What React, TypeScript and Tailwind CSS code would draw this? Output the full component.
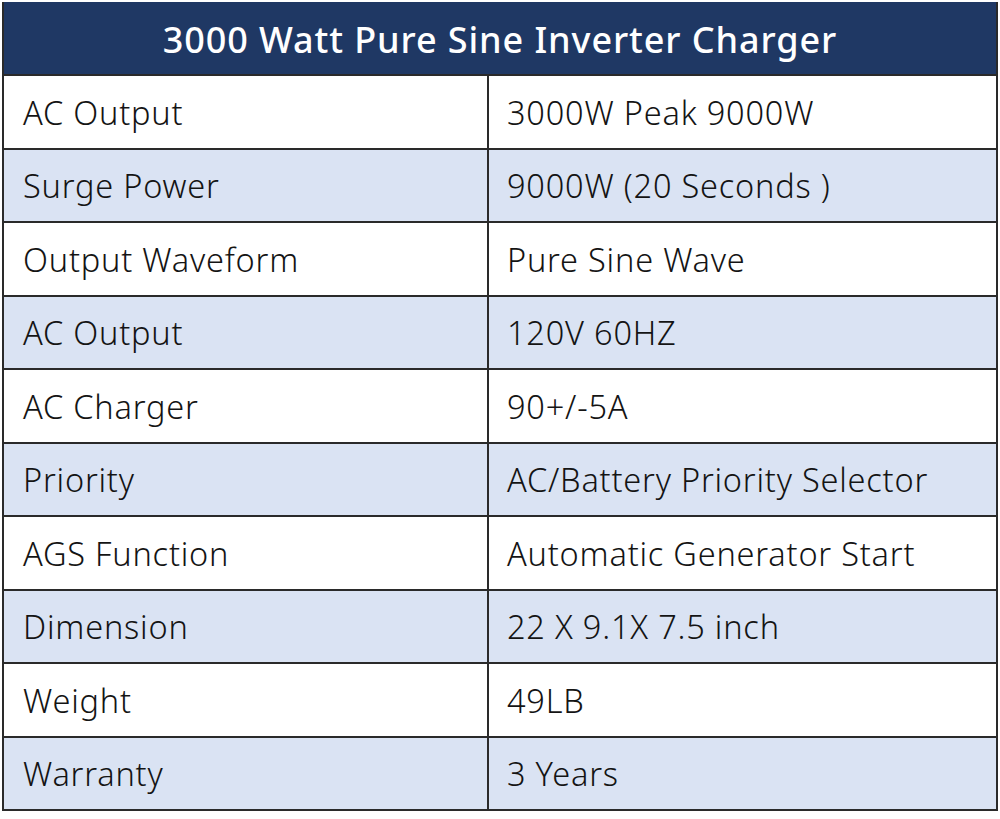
import React from "react";

const rows: [string, string][] = [
  ["AC Output", "3000W Peak 9000W"],
  ["Surge Power", "9000W (20 Seconds )"],
  ["Output Waveform", "Pure Sine Wave"],
  ["AC Output", "120V 60HZ"],
  ["AC Charger", "90+/-5A"],
  ["Priority", "AC/Battery Priority Selector"],
  ["AGS Function", "Automatic Generator Start"],
  ["Dimension", "22 X 9.1X 7.5 inch"],
  ["Weight", "49LB"],
  ["Warranty", "3 Years"],
];

export default function App() {
  return (
    <div className="w-[1000px] h-[819px] bg-white pt-[2px] pl-[2px]" style={{ fontFamily: '"Noto Sans", "Open Sans", sans-serif' }}>
      <div className="w-[996px] border-2 border-[#2a2a2a] border-b-0">
        <div className="h-[74px] -mt-[2px] pt-[3px] bg-[#1f3864] border-b-2 border-[#2a2a2a] flex items-center justify-center text-white text-[36px] font-medium tracking-[0.9px]">
          3000 Watt Pure Sine Inverter Charger
        </div>
        {rows.map(([a, b], i) => (
          <div
            key={i}
            className={`grid grid-cols-[485px_1fr] h-[73.5px] border-b-2 border-[#2a2a2a] text-[32.5px] font-light tracking-[0.8px] text-[#141414] ${i % 2 === 1 ? "bg-[#dae3f3]" : "bg-white"}`}
          >
            <div className="flex items-center pl-[19px] pt-[3px] border-r-2 border-[#2a2a2a]">{a}</div>
            <div className="flex items-center pl-[18px] pt-[3px]">{b}</div>
          </div>
        ))}
      </div>
    </div>
  );
}
